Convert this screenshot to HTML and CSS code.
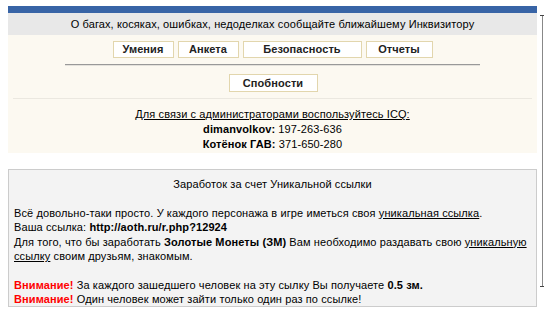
FILE: index.html
```html
<!DOCTYPE html>
<html lang="ru">
<head>
<meta charset="UTF-8">
<title>Уникальная ссылка</title>
<link rel="stylesheet" href="styles.css">
</head>
<body>
  <div class="page">
    <div class="topbar"></div>
    <div class="notice">О багах, косяках, ошибках, недоделках сообщайте ближайшему Инквизитору</div>

    <div class="panel">
      <div class="tabs">
        <a class="tab tab-skills" href="#">Умения</a>
        <a class="tab tab-form" href="#">Анкета</a>
        <a class="tab tab-security" href="#">Безопасность</a>
        <a class="tab tab-reports" href="#">Отчеты</a>
      </div>
      <div class="rule"></div>
      <div class="tabs">
        <a class="tab tab-abilities" href="#">Спобности</a>
      </div>
      <div class="sep"></div>
      <div class="contacts">
        <div class="contacts-title">Для связи с администраторами воспользуйтесь ICQ:</div>
        <div><b>dimanvolkov:</b> 197-263-636</div>
        <div><b>Котёнок ГАВ:</b> 371-650-280</div>
      </div>
    </div>

    <div class="earn">
      <div class="earn-title">Заработок за счет Уникальной ссылки</div>
      <p>
        Всё довольно-таки просто. У каждого персонажа в игре иметься своя <u>уникальная ссылка</u>.<br>
        Ваша ссылка: <b>http://aoth.ru/r.php?12924</b><br>
        Для того, что бы заработать <b>Золотые Монеты (ЗМ)</b> Вам необходимо раздавать свою <u>уникальную</u><br>
        <u>ссылку</u> своим друзьям, знакомым.
      </p>
      <p>
        <b class="warn">Внимание!</b> За каждого зашедшего человек на эту сылку Вы получаете <b>0.5 зм.</b><br>
        <b class="warn">Внимание!</b> Один человек может зайти только один раз по ссылке!
      </p>
    </div>
  </div>
  <div class="frame-edge"></div>
</body>
</html>
```

FILE: styles.css
```css
body {
  margin: 0;
  font-family: "Liberation Sans", Arial, sans-serif;
  font-size: 11px;
  letter-spacing: 0.1px;
  color: #000;
  background: #fff;
}

.page {
  width: 529px;
  margin: 6px 0 0 8px;
}

.topbar {
  height: 7px;
  background: #3864a6;
}

.notice {
  height: 22px;
  line-height: 22px;
  background: #e8e8e8;
  text-align: center;
}

.panel {
  background: #fcf9f1;
  padding: 6px 0 0;
  height: 112px;
}

.tabs {
  display: flex;
  justify-content: center;
  gap: 4px;
}

.tab {
  display: block;
  height: 15px;
  line-height: 15px;
  border: 1px solid #e2d6ad;
  background: #fff;
  color: #222;
  font-weight: bold;
  text-align: center;
  text-decoration: none;
}

.tab-skills { width: 59px; }
.tab-form { width: 59px; }
.tab-security { width: 117px; }
.tab-reports { width: 65px; }

.tab-abilities {
  width: 87px;
  height: 16px;
  line-height: 16px;
  margin-top: 8px;
  margin-left: 1px;
}

.rule {
  width: 415px;
  height: 1px;
  margin: 6px auto 0;
  background: #999;
  border-bottom: 1px solid #e4e2dc;
}

.sep {
  height: 1px;
  margin: 6px 5px 0;
  background: #ebe8e0;
}

.contacts {
  margin-top: 8px;
  text-align: center;
  line-height: 15px;
}

.contacts-title {
  text-decoration: underline;
}

.earn {
  margin-top: 16px;
  border: 1px solid #cccccc;
  background: #f3f3f3;
  padding: 7px 5px 4px;
  height: 125px;
  line-height: 14.5px;
}

.earn-title {
  text-align: center;
}

.earn p {
  margin: 14px 0 0;
}

.warn {
  color: #ff0000;
}

/* edge of the surrounding frame */
.frame-edge {
  position: absolute;
  left: 542px;
  top: 15px;
  width: 1px;
  height: 272px;
  background: #888;
}

.frame-edge:before,
.frame-edge:after {
  content: '';
  position: absolute;
  left: -2px;
  width: 4px;
  height: 1px;
  background: #444;
}

.frame-edge:before { top: 0; }
.frame-edge:after { bottom: 0; }
```
